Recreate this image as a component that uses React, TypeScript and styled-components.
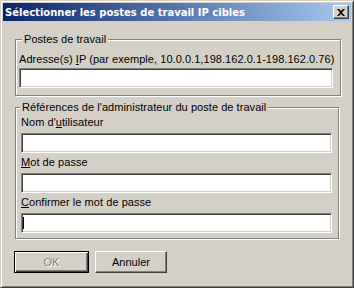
import styled, { createGlobalStyle } from 'styled-components';

const GlobalStyle = createGlobalStyle`
  html, body {
    margin: 0;
    padding: 0;
    background: #d4d0c8;
  }
  body {
    font-family: "Liberation Sans", Arial, sans-serif;
    font-size: 11px;
    letter-spacing: 0.05px;
    color: #000;
  }
`;

const Window = styled.div`
  box-sizing: border-box;
  width: 354px;
  height: 288px;
  background: #d4d0c8;
  border: 1px solid;
  border-color: #d4d0c8 #404040 #404040 #d4d0c8;
  box-shadow: inset 1px 1px #fff, inset -1px -1px #808080;
  padding: 2px;
  display: flex;
  flex-direction: column;
`;

const TitleBar = styled.div`
  height: 18px;
  display: flex;
  align-items: center;
  justify-content: space-between;
  padding: 0 2px 0 2px;
  background: linear-gradient(to right, #0a246a, #a6caf0);
`;

const Title = styled.span`
  color: #fff;
  font-family: "DejaVu Sans", Verdana, sans-serif;
  font-weight: bold;
  font-size: 10px;
  letter-spacing: 0;
  white-space: nowrap;
`;

const CloseButton = styled.button`
  box-sizing: border-box;
  width: 16px;
  height: 14px;
  padding: 0;
  margin: 0;
  background: #d4d0c8;
  border: 1px solid;
  border-color: #fff #404040 #404040 #fff;
  box-shadow: inset -1px -1px #808080;
  display: flex;
  align-items: center;
  justify-content: center;
`;

const Body = styled.div`
  flex: 1;
  display: flex;
  flex-direction: column;
  padding: 12px 12px 0 12px;
`;

const Group = styled.fieldset<{ $gap: number; $top: number; $bottom: number }>`
  box-sizing: border-box;
  width: 324px;
  margin: 0 0 ${p => p.$gap}px 0;
  padding: ${p => p.$top}px 6px ${p => p.$bottom}px 3px;
  border: 1px solid #808080;
  box-shadow: 1px 1px 0 #fff, inset 1px 1px 0 #fff;
  display: flex;
  flex-direction: column;
`;

const Legend = styled.legend<{ $offset: number }>`
  padding: 0 2px;
  margin-left: ${p => p.$offset}px;
  line-height: 13px;
  background: #d4d0c8;
`;

const Field = styled.div<{ $inset: number; $labelGap: number }>`
  display: flex;
  flex-direction: column;
  padding-left: ${p => p.$inset}px;
  & + & {
    margin-top: 3px;
  }
  & > label {
    margin-bottom: ${p => p.$labelGap}px;
  }
`;

const Label = styled.label`
  line-height: 13px;
  white-space: nowrap;
`;

const Key = styled.span`
  text-decoration: underline;
`;

const Input = styled.div<{ $width: number }>`
  box-sizing: border-box;
  position: relative;
  width: ${p => p.$width}px;
  height: 20px;
  background: #fff;
  border: 1px solid;
  border-color: #808080 #fff #fff #808080;
  box-shadow: inset 1px 1px #404040, inset -1px -1px #d4d0c8;
`;

const Caret = styled.span`
  position: absolute;
  left: 1px;
  top: 3px;
  width: 1px;
  height: 12px;
  background: #000;
`;

const Buttons = styled.div`
  display: flex;
  gap: 6px;
  margin-left: -1px;
`;

const Button = styled.button<{ $default?: boolean; $w: number }>`
  box-sizing: border-box;
  width: ${p => p.$w}px;
  height: 22px;
  margin: 0;
  padding: 0;
  font-family: inherit;
  font-size: 11px;
  background: #d4d0c8;
  border: 1px solid;
  border-color: ${p => (p.$default ? '#000' : '#fff #404040 #404040 #fff')};
  box-shadow: ${p =>
    p.$default
      ? 'inset 1px 1px #fff, inset -1px -1px #404040, inset -2px -2px #808080'
      : 'inset -1px -1px #808080'};
  color: #000;
  &:disabled {
    color: #808080;
    text-shadow: 1px 1px #fff;
  }
`;

export default function App() {
  return (
    <>
      <GlobalStyle />
      <Window>
        <TitleBar>
          <Title>Sélectionner les postes de travail IP cibles</Title>
          <CloseButton aria-label="Fermer">
            <svg width="8" height="7" viewBox="0 0 8 7">
              <path d="M0 0h2l2 2 2-2h2L5 3.5 8 7H6L4 5 2 7H0l3-3.5z" fill="#000" />
            </svg>
          </CloseButton>
        </TitleBar>

        <Body>
          <Group $gap={5} $top={7} $bottom={7}>
            <Legend $offset={3}>Postes de travail</Legend>
            <Field $inset={0} $labelGap={2}>
              <Label>
                Adresse(s) <Key>I</Key>P (par exemple, 10.0.0.1,198.162.0.1-198.162.0.76)
              </Label>
              <Input $width={314} />
            </Field>
          </Group>

          <Group $gap={12} $top={2} $bottom={5}>
            <Legend $offset={1}>Références de l'administrateur du poste de travail</Legend>
            <Field $inset={2} $labelGap={4}>
              <Label>
                Nom d'<Key>u</Key>tilisateur
              </Label>
              <Input $width={311} />
            </Field>
            <Field $inset={2} $labelGap={4}>
              <Label>
                <Key>M</Key>ot de passe
              </Label>
              <Input $width={311} />
            </Field>
            <Field $inset={2} $labelGap={4}>
              <Label>
                <Key>C</Key>onfirmer le mot de passe
              </Label>
              <Input $width={311}>
                <Caret />
              </Input>
            </Field>
          </Group>

          <Buttons>
            <Button $default $w={75} disabled>
              OK
            </Button>
            <Button $w={72}>Annuler</Button>
          </Buttons>
        </Body>
      </Window>
    </>
  );
}
